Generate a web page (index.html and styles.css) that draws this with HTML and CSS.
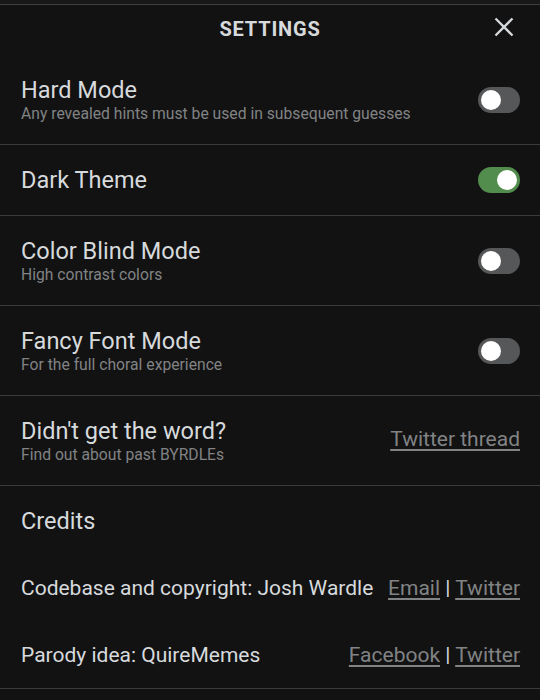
FILE: index.html
```html
<!DOCTYPE html>
<html lang="en">
<head>
<meta charset="utf-8">
<title>Settings</title>
<link rel="stylesheet" href="styles.css">
</head>
<body>
<div class="backdrop"></div>
<section class="modal">
  <header class="modal-header">
    <h1 class="title">SETTINGS</h1>
    <button class="close" aria-label="Close">
      <svg viewBox="0 0 20 20" width="20" height="20"><path d="M1.5 1.5 18.5 18.5M18.5 1.5 1.5 18.5" stroke="#d7dadc" stroke-width="2.3" stroke-linecap="butt" fill="none"/></svg>
    </button>
  </header>

  <div class="setting">
    <div class="text">
      <div class="label">Hard Mode</div>
      <div class="desc">Any revealed hints must be used in subsequent guesses</div>
    </div>
    <div class="switch"><span class="knob"></span></div>
  </div>

  <div class="setting">
    <div class="text">
      <div class="label">Dark Theme</div>
    </div>
    <div class="switch on"><span class="knob"></span></div>
  </div>

  <div class="setting">
    <div class="text">
      <div class="label">Color Blind Mode</div>
      <div class="desc">High contrast colors</div>
    </div>
    <div class="switch"><span class="knob"></span></div>
  </div>

  <div class="setting">
    <div class="text">
      <div class="label">Fancy Font Mode</div>
      <div class="desc">For the full choral experience</div>
    </div>
    <div class="switch"><span class="knob"></span></div>
  </div>

  <div class="setting">
    <div class="text">
      <div class="label">Didn't get the word?</div>
      <div class="desc">Find out about past BYRDLEs</div>
    </div>
    <a class="link big" href="#">Twitter thread</a>
  </div>

  <div class="credits">
    <div class="label credits-title">Credits</div>
    <div class="credit">
      <span class="credit-text">Codebase and copyright: Josh Wardle</span>
      <span class="credit-links"><a class="link" href="#">Email</a> | <a class="link" href="#">Twitter</a></span>
    </div>
    <div class="credit">
      <span class="credit-text">Parody idea: QuireMemes</span>
      <span class="credit-links"><a class="link" href="#">Facebook</a> | <a class="link" href="#">Twitter</a></span>
    </div>
  </div>
</section>
</body>
</html>
```

FILE: styles.css
```css
html, body {
  margin: 0;
  padding: 0;
  background: #121213;
  height: 100%;
}
body {
  font-family: Roboto, "Liberation Sans", Arial, sans-serif;
  color: #d7dadc;
  overflow: hidden;
}
.backdrop {
  height: 4px;
  background: #181818;
}
.modal {
  border-top: 1px solid #3b423b;
  background: #121213;
}
.modal-header {
  height: 50px;
  display: flex;
  align-items: center;
  justify-content: center;
  position: relative;
}
.title {
  margin: 0 0 2px;
  font-size: 20px;
  font-weight: 700;
  letter-spacing: 0.8px;
  color: #d7dadc;
}
.close {
  position: absolute;
  right: 26px;
  top: 12px;
  background: none;
  border: 0;
  padding: 0;
  width: 20px;
  height: 20px;
  display: flex;
}
.close svg {
  width: 20px;
  height: 20px;
}
.setting {
  display: flex;
  align-items: center;
  justify-content: space-between;
  padding: 21px 20px 21px 21px;
  border-bottom: 1px solid #3a3a3c;
}
.label {
  font-size: 23.5px;
  line-height: 28px;
  color: #d7dadc;
}
.desc {
  font-size: 15.7px;
  line-height: 19px;
  color: #818384;
}
.switch {
  width: 42px;
  height: 26px;
  border-radius: 13px;
  background: #565758;
  display: flex;
  align-items: center;
  padding: 0 3px;
  box-sizing: border-box;
}
.switch.on {
  background: #538d4e;
  justify-content: flex-end;
}
.knob {
  width: 20px;
  height: 20px;
  border-radius: 50%;
  background: #ffffff;
}
.link {
  color: #818384;
  text-decoration: underline;
  text-underline-offset: 3px;
}
.link.big {
  font-size: 21px;
  margin-bottom: 4px;
}
.credits {
  padding: 21px 20px 0 21px;
  border-bottom: 1px solid #3a3a3c;
}
.credits-title {
  padding-bottom: 19px;
}
.credit {
  height: 67px;
  display: flex;
  align-items: center;
  justify-content: space-between;
  font-size: 21px;
}
.credit-text {
  color: #d7dadc;
}
.credit-links {
  color: #d7dadc;
}
```
